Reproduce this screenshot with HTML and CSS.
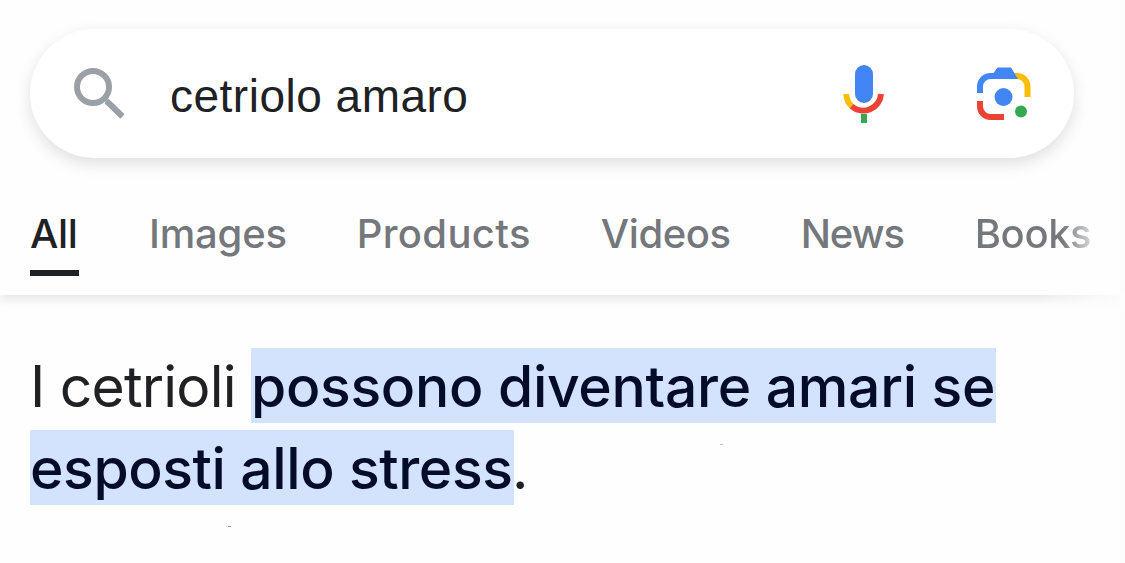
FILE: index.html
```html
<!DOCTYPE html>
<html lang="it">
<head>
<meta charset="utf-8">
<title>cetriolo amaro</title>
<link rel="stylesheet" href="styles.css">
</head>
<body>
<header class="header">
  <div class="search">
    <svg class="icon-search" viewBox="0 0 54 54">
      <circle cx="20" cy="20" r="16" fill="none" stroke="#9aa0a6" stroke-width="6"/>
      <path d="M33.500 34L49.500 49.500" stroke="#9aa0a6" stroke-width="6"/>
      <path d="M31 31l5 5" stroke="#9aa0a6" stroke-width="3"/>
    </svg>
    <span class="query">cetriolo amaro</span>
    <svg class="icon-mic" viewBox="0 0 42 60">
      <rect x="12" y="1" width="18" height="38" rx="9" fill="#4285f4"/>
      <path d="M3.300 30A17.500 17.500 0 0 0 8.800 42.400" fill="none" stroke="#fbbc04" stroke-width="6"/>
      <path d="M8.600 42.200A17.800 17.800 0 0 0 38 30" fill="none" stroke="#ea4335" stroke-width="6"/>
      <path d="M18 50h6v9h-6z" fill="#34a853"/>
    </svg>
    <svg class="icon-lens" viewBox="0 0 54 54">
      <path d="M37 9h3a10.500 10.500 0 0 1 10.500 10.500V30" fill="none" stroke="#fbbc04" stroke-width="6"/>
      <path d="M0 26v-6.500A13.500 13.500 0 0 1 13.500 6H16.500l4-5.500h13.500l7 11.500h-27.500A7.500 7.500 0 0 0 6 19.500V26z" fill="#4285f4"/>
      <path d="M3 34v5.500A10.500 10.500 0 0 0 13.500 50H27" fill="none" stroke="#ea4335" stroke-width="6"/>
      <circle cx="26.500" cy="30" r="9" fill="#4285f4"/>
      <circle cx="44" cy="44.500" r="6" fill="#34a853"/>
    </svg>
  </div>
  <nav class="tabs">
    <a class="tab tab-active">All</a>
    <a class="tab tab-images">Images</a>
    <a class="tab tab-products">Products</a>
    <a class="tab tab-videos">Videos</a>
    <a class="tab tab-news">News</a>
    <a class="tab tab-books">Books</a>
  </nav>
</header>
<main class="answer">
  <p class="line"><span class="lead">I cetrioli</span><mark class="mark mark-first">possono diventare amari se</mark></p>
  <p class="line"><mark class="mark mark-second">esposti allo stress</mark><span class="stop">.</span></p>
  <i class="speck speck-right"></i>
  <i class="speck speck-left"></i>
</main>
</body>
</html>
```
FILE: styles.css
```css
* { box-sizing: border-box; }
body {
  margin: 0;
  width: 1125px;
  height: 563px;
  overflow: hidden;
  background: linear-gradient(90deg, #fefefe 1120px, #fcfcfc 1120px);
  font-family: Inter, Roboto, sans-serif;
}
.header {
  position: relative;
  height: 295px;
  padding: 29px 0 0 30px;
  background: linear-gradient(90deg, #fefefe 1120px, #fcfcfc 1120px);
  box-shadow: 0 4px 10px rgba(60, 64, 110, .13);
}
/* Fades the header's shadow out at the scrolling edge */
.header::after {
  content: "";
  position: absolute;
  right: 0;
  bottom: -16px;
  width: 90px;
  height: 17px;
  background: linear-gradient(90deg, rgba(254, 254, 254, 0), #fdfdfd);
}
.search {
  display: flex;
  align-items: flex-start;
  width: 1044px;
  height: 129px;
  padding-left: 43px;
  border-radius: 65px;
  background: #fff;
  box-shadow: 0 6px 16px rgba(0, 0, 0, .12);
}
.icon-search { width: 54px; height: 54px; margin-top: 38px; }
.query {
  width: 670px;
  margin: 42px 0 0 43px;
  font: 46px/50px "Liberation Sans", Arial, sans-serif;
  letter-spacing: .5px;
  color: #202124;
  white-space: nowrap;
}
.icon-mic { width: 42px; height: 60px; margin: 35px 0 0 3px; }
.icon-lens { width: 54px; height: 54px; margin: 38px 0 0 92px; }
.tabs { display: flex; gap: 70px; margin-top: 51px; }
.tab {
  height: 67px;
  font-size: 40px;
  line-height: 50px;
  font-weight: 500;
  color: #74777c;
  white-space: nowrap;
}
.tab-active { width: 49px; color: #202124; border-bottom: 6px solid #202124; letter-spacing: -.3px; }
.tab-images { letter-spacing: -.2px; }
.tab-products { letter-spacing: .35px; }
.tab-videos { letter-spacing: -.4px; }
.tab-news { letter-spacing: -1.2px; }
.tab-books {
  margin-left: 1px;
  letter-spacing: -.4px;
  background: linear-gradient(90deg, #74777c 75%, #d5d5d8 100%);
  background-clip: text;
  color: transparent;
}
.answer { position: relative; padding: 53px 0 0 30px; }
.line {
  display: flex;
  height: 75px;
  margin: 0 0 7px;
  font-size: 57px;
  line-height: 77px;
  color: #202124;
  white-space: nowrap;
}
.lead { width: 221px; letter-spacing: -.8px; }
.mark { background: #d3e3fd; color: #040c28; font-weight: 540; }
.mark-first { width: 745px; letter-spacing: -.3px; }
.mark-second { width: 484px; letter-spacing: -.4px; }
.stop { margin-left: -2px; }
.speck { position: absolute; width: 3px; height: 1px; background: #c4c4c4; }
.speck-right { left: 720px; top: 149px; }
.speck-left { left: 228px; top: 231px; background: #999; }
```
